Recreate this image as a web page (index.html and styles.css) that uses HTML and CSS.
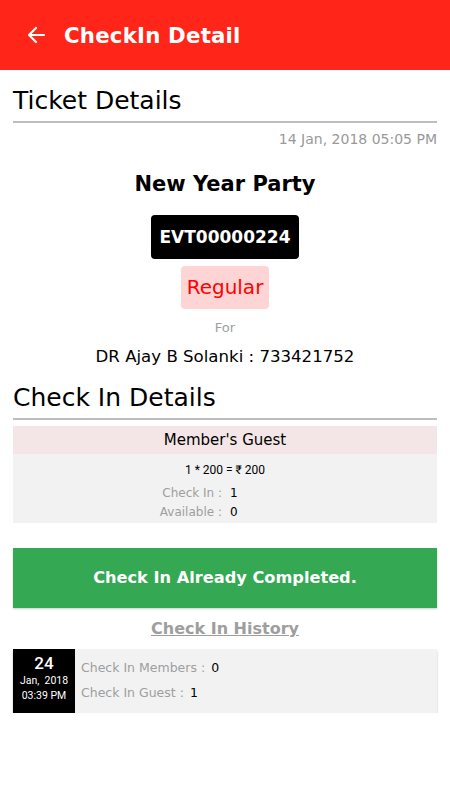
FILE: index.html
```html
<!DOCTYPE html>
<html lang="en">
<head>
  <meta charset="UTF-8">
  <meta name="viewport" content="width=device-width, initial-scale=1">
  <title>CheckIn Detail</title>
  <link rel="stylesheet" href="styles.css">
</head>
<body>
  <!-- Barra superior -->
  <header class="topbar">
    <svg class="back" viewBox="0 0 24 24" width="24" height="24">
      <path d="M20 12H5M12 5l-7 7 7 7" fill="none" stroke="#fff" stroke-width="2.2" stroke-linecap="round" stroke-linejoin="round"/>
    </svg>
    <h1>CheckIn Detail</h1>
  </header>

  <main class="content">
    <!-- Datos del ticket -->
    <h2 class="section-title">Ticket Details</h2>
    <div class="date">14 Jan, 2018 05:05 PM</div>

    <div class="ticket">
      <div class="event-name">New Year Party</div>
      <div class="event-code">EVT00000224</div>
      <div class="ticket-type">Regular</div>
      <div class="for">For</div>
      <div class="member">DR Ajay B Solanki : 733421752</div>
    </div>

    <!-- Detalle de check in -->
    <h2 class="section-title">Check In Details</h2>
    <div class="guest-card">
      <div class="guest-head">Member's Guest</div>
      <div class="guest-body">
        <div class="price">1 * 200 = ₹ 200</div>
        <div class="stat"><span class="label">Check In :</span><span class="value">1</span></div>
        <div class="stat"><span class="label">Available :</span><span class="value">0</span></div>
      </div>
    </div>

    <div class="done-btn">Check In Already Completed.</div>

    <div class="history-title">Check In History</div>

    <div class="history-row">
      <div class="history-date">
        <div class="day">24</div>
        <div class="small">Jan,&nbsp; 2018</div>
        <div class="small">03:39 PM</div>
      </div>
      <div class="history-info">
        <div><span class="label">Check In Members :</span><span class="value">0</span></div>
        <div><span class="label">Check In Guest :</span><span class="value">1</span></div>
      </div>
    </div>
  </main>
</body>
</html>
```

FILE: styles.css
```css
/* Reinicio global */
* {
  margin: 0;
  padding: 0;
  box-sizing: border-box;
}

body {
  background: #fff;
  font-family: 'DejaVu Sans', sans-serif;
  color: #000;
  width: 450px;
}

/* Barra superior */
.topbar {
  height: 70px;
  background: #ff2619;
  display: flex;
  align-items: center;
  padding-left: 24px;
  gap: 16px;
}

.topbar h1 {
  color: #fff;
  font-size: 21.3px;
  font-weight: bold;
  letter-spacing: 0.2px;
}

.content {
  padding: 0 13px;
}

.section-title {
  font-size: 25px;
  font-weight: normal;
  border-bottom: 2px solid #bdbdbd;
  padding: 16px 0 5px;
  line-height: 30px;
}

.date {
  text-align: right;
  color: #999;
  font-size: 14px;
  line-height: 17px;
  margin-top: 8px;
}

.ticket {
  display: flex;
  flex-direction: column;
  align-items: center;
}

.event-name {
  font-size: 21px;
  line-height: 25px;
  font-weight: bold;
  margin-top: 24px;
}

.event-code {
  background: #000;
  color: #fff;
  font-size: 17px;
  line-height: 22px;
  font-weight: bold;
  border-radius: 4px;
  padding: 11px 8.5px;
  margin-top: 18px;
}

.ticket-type {
  background: #ffd4d4;
  color: #ff0000;
  font-size: 20px;
  line-height: 23px;
  border-radius: 4px;
  padding: 10px 6px;
  margin-top: 7px;
}

.for {
  color: #9e9e9e;
  font-size: 13px;
  line-height: 16px;
  margin-top: 11px;
}

.member {
  font-size: 16.6px;
  line-height: 20px;
  margin-top: 11px;
}

/* Tarjeta del invitado */
.guest-card {
  margin-top: 6px;
}

.guest-head {
  background: #f4e6e6;
  text-align: center;
  font-size: 15px;
  height: 28px;
  line-height: 28px;
}

.guest-body {
  background: #f2f2f2;
  padding: 8px 0 1px;
  font-size: 12px;
}

.price {
  text-align: center;
  font-family: Roboto, sans-serif;
  line-height: 16px;
  margin-bottom: 6px;
}

.stat {
  display: grid;
  grid-template-columns: 1fr 1fr;
  line-height: 19px;
}

.stat .label {
  text-align: right;
  color: #9e9e9e;
  padding-right: 3px;
}

.stat .value {
  padding-left: 5px;
}

.done-btn {
  margin-top: 25px;
  background: #34a853;
  color: #fff;
  font-size: 16.2px;
  font-weight: bold;
  text-align: center;
  height: 60px;
  line-height: 60px;
  box-shadow: 0 1px 2px rgba(0,0,0,0.2);
}

.history-title {
  text-align: center;
  color: #9e9e9e;
  font-size: 16px;
  line-height: 20px;
  font-weight: bold;
  text-decoration: underline;
  margin-top: 11px;
}

/* Fila del historial */
.history-row {
  display: flex;
  margin-top: 10px;
  background: #f2f2f2;
  box-shadow: 0 2px 2px rgba(0,0,0,0.25);
}

.history-date {
  background: #000;
  color: #fff;
  width: 62px;
  height: 64px;
  text-align: center;
  font-family: Roboto, sans-serif;
}

.history-date .day {
  font-size: 17px;
  font-weight: 500;
  line-height: 20px;
  margin-top: 4px;
}

.history-date .small {
  font-size: 10.5px;
  line-height: 15px;
}

.history-info {
  padding: 6px 6px;
  font-size: 12.5px;
  line-height: 25px;
}

.history-info .label {
  color: #9e9e9e;
  margin-right: 6px;
}
```
